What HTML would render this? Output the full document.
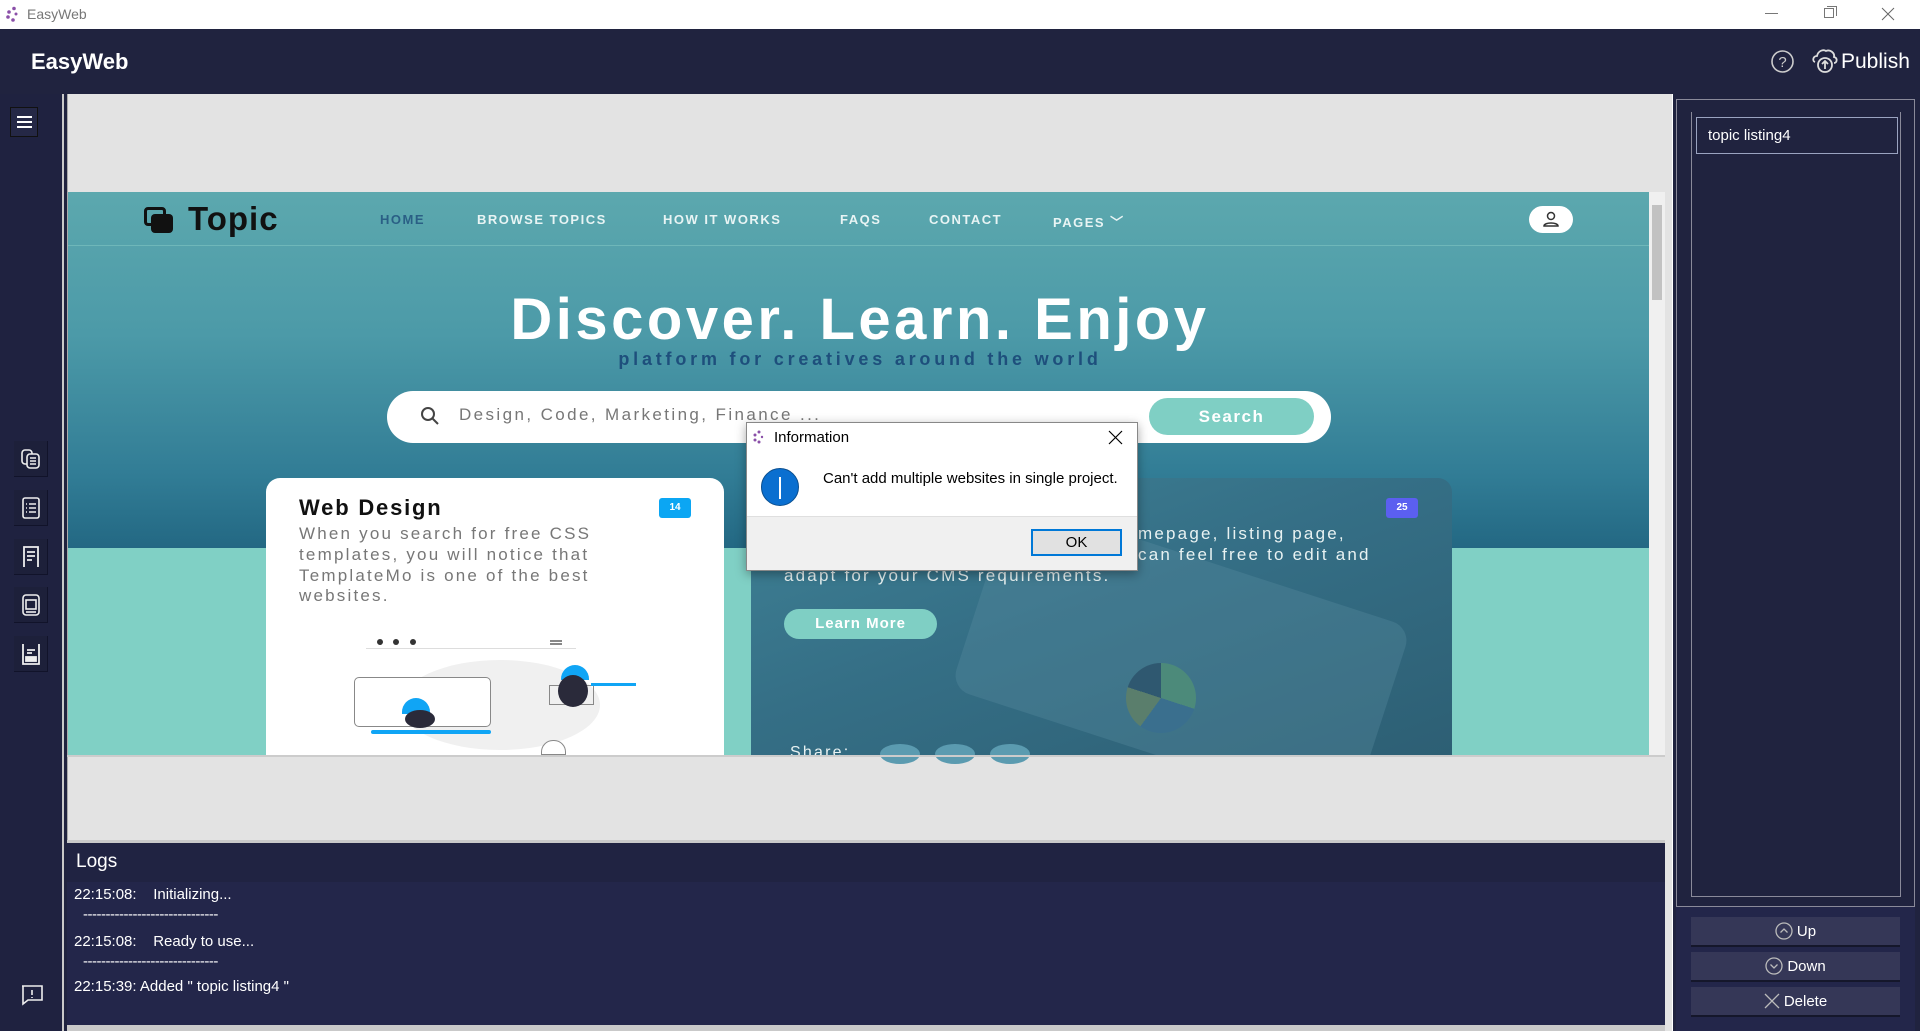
<!DOCTYPE html>
<html><head><meta charset="utf-8"><style>
*{box-sizing:border-box;margin:0;padding:0}
body{width:1920px;height:1031px;overflow:hidden;background:#20233f;font-family:"Liberation Sans",sans-serif;position:relative}
.a{position:absolute}
.nav{position:absolute;top:212px;font-size:13px;font-weight:bold;color:#e8f4f4;letter-spacing:1.5px}
.sb{position:absolute;left:14px;width:34px;height:36px;background:#1d203a;border-right:1px solid #11132a;border-bottom:1px solid #11132a}
.btn{position:absolute;left:1691px;width:209px;height:30px;background:#353757;border-bottom:2px solid #15172b;color:#fff;font-size:15px;display:flex;align-items:center;justify-content:center;gap:4px}
.log{position:absolute;left:74px;color:#fff;font-size:15px}
.ct{position:absolute;left:299px;font-size:17px;color:#777;letter-spacing:2.2px}
.wt{position:absolute;font-size:17px;color:#e8f2f2;letter-spacing:2.2px}
</style></head><body>
<div class="a" style="left:0;top:0;width:1920px;height:29px;background:#fff"></div>
<svg class="a" style="left:5px;top:6px" width="14" height="16"><circle cx="9" cy="2.5" r="1.8" fill="#8a4fa8"/><circle cx="4" cy="6" r="1.8" fill="#8a4fa8"/><circle cx="3" cy="11" r="1.8" fill="#8a4fa8"/><circle cx="8" cy="14" r="1.8" fill="#8a4fa8"/><circle cx="11" cy="8" r="1.5" fill="#8a4fa8"/></svg>
<div class="a" style="left:27px;top:6px;font-size:14px;color:#777">EasyWeb</div>
<div class="a" style="left:1765px;top:13px;width:13px;height:1px;background:#777"></div>
<div class="a" style="left:1824px;top:8px;width:10px;height:10px;border:1px solid #777"></div>
<div class="a" style="left:1827px;top:6px;width:10px;height:10px;border-top:1px solid #777;border-right:1px solid #777"></div>
<svg class="a" style="left:1881px;top:7px" width="14" height="14"><path d="M1 1L13 13M13 1L1 13" stroke="#666" stroke-width="1"/></svg>
<div class="a" style="left:31px;top:49px;font-size:22px;font-weight:bold;color:#fff">EasyWeb</div>
<svg class="a" style="left:1770px;top:49px" width="25" height="25"><circle cx="12.5" cy="12.5" r="10.5" fill="none" stroke="#ccc" stroke-width="1.6"/><text x="12.5" y="18" font-size="15" fill="#ccc" text-anchor="middle" font-family="Liberation Sans">?</text></svg>
<svg class="a" style="left:1811px;top:47px" width="28" height="28"><path d="M4 15C1 14 2 9 6 9C7 4 12 2 15 4C19 2 24 6 23 10C27 11 26 16 23 16" fill="none" stroke="#ddd" stroke-width="1.8"/><circle cx="14" cy="18" r="7" fill="none" stroke="#ddd" stroke-width="1.8"/><path d="M14 22V14M11 17L14 14L17 17" stroke="#ddd" stroke-width="1.8" fill="none"/></svg>
<div class="a" style="left:1841px;top:50px;font-size:21px;color:#fff">Publish</div>
<div class="a" style="left:0;top:94px;width:64px;height:937px;background:#1f2240;border-right:2px solid #c9c9c9"></div>
<div class="a" style="left:10px;top:107px;width:28px;height:30px;background:#252846;border:1px solid #111"></div>
<div class="a" style="left:17px;top:116px;width:15px;height:2px;background:#fff;box-shadow:0 5px 0 #fff,0 10px 0 #fff"></div>
<div class="sb" style="top:441px"></div>
<svg class="a" style="left:20px;top:448px" width="22" height="22" fill="none" stroke="#eee" stroke-width="1.6"><rect x="2" y="2" width="10" height="14" rx="3"/><rect x="7" y="6" width="12" height="14" rx="3" fill="#1d203a"/><path d="M10 10h6M10 13h6M10 16h6"/></svg>
<div class="sb" style="top:490px"></div>
<svg class="a" style="left:21px;top:496px" width="20" height="24" fill="none" stroke="#eee" stroke-width="1.6"><rect x="2" y="2" width="16" height="20" rx="2"/><path d="M5 8h1M8 8h7M5 12h1M8 12h7M5 16h1M8 16h7"/></svg>
<div class="sb" style="top:539px"></div>
<svg class="a" style="left:21px;top:545px" width="20" height="24" fill="none" stroke="#eee" stroke-width="1.8"><path d="M3 22V2h14v20"/><path d="M6 7h8M6 11h8M6 15h5"/></svg>
<div class="sb" style="top:587px"></div>
<svg class="a" style="left:21px;top:593px" width="20" height="24" fill="none" stroke="#eee" stroke-width="1.6"><rect x="2" y="2" width="16" height="20" rx="3"/><rect x="5" y="7" width="10" height="9"/><path d="M5 19h10"/></svg>
<div class="sb" style="top:636px"></div>
<svg class="a" style="left:21px;top:642px" width="20" height="24" fill="none" stroke="#eee" stroke-width="1.8"><path d="M2 2v20h16V2"/><path d="M6 8h8M6 11h5" /><rect x="5" y="15" width="10" height="4" fill="#eee"/></svg>
<svg class="a" style="left:20px;top:984px" width="24" height="22" fill="none" stroke="#eee" stroke-width="1.6"><path d="M2 2h20v14H8l-5 4V2z"/><path d="M12 6v5M12 13v1"/></svg>
<div class="a" style="left:67px;top:94px;width:1598px;height:746px;background:#e3e3e3;border-left:1px solid #aaa"></div>
<div class="a" style="left:68px;top:192px;width:1581px;height:563px;background:#80d0c5;overflow:hidden">
 <div class="a" style="left:0;top:0;width:1581px;height:356px;background:linear-gradient(180deg,#5ca8ae 0%,#4c9aa8 40%,#317c95 80%,#236883 100%)"></div>
 <div class="a" style="left:0;top:53px;width:1581px;height:1px;background:#6fb7b9"></div>
 <div class="a" style="left:76px;top:15px;width:22px;height:19px;border:3px solid #111;border-radius:4px"></div>
 <div class="a" style="left:83px;top:22px;width:22px;height:19px;background:#111;border-radius:4px"></div>
 <div class="a" style="left:120px;top:8px;font-size:33px;font-weight:bold;color:#111;letter-spacing:1px">Topic</div>
</div>
<div class="nav" style="left:380px;color:#2a5f85">HOME</div>
<div class="nav" style="left:477px">BROWSE TOPICS</div>
<div class="nav" style="left:663px">HOW IT WORKS</div>
<div class="nav" style="left:840px">FAQS</div>
<div class="nav" style="left:929px">CONTACT</div>
<div class="nav" style="left:1053px">PAGES ﹀</div>
<div class="a" style="left:1529px;top:206px;width:44px;height:27px;background:#fff;border-radius:14px"></div>
<svg class="a" style="left:1541px;top:210px" width="20" height="18" fill="none" stroke="#333" stroke-width="1.5"><circle cx="10" cy="6" r="3.5"/><path d="M3 16c0-4 14-4 14 0z"/></svg>
<div class="a" style="left:0;top:286px;width:1720px;text-align:center;font-size:58px;font-weight:bold;color:#fff;letter-spacing:3.5px">Discover. Learn. Enjoy</div>
<div class="a" style="left:0;top:349px;width:1720px;text-align:center;font-size:18px;font-weight:bold;color:#1e4f7c;letter-spacing:3.8px">platform for creatives around the world</div>
<div class="a" style="left:387px;top:391px;width:944px;height:52px;background:#fff;border-radius:26px"></div>
<svg class="a" style="left:420px;top:406px" width="20" height="20" fill="none" stroke="#444" stroke-width="2"><circle cx="8" cy="8" r="6"/><path d="M12.5 12.5L18 18"/></svg>
<div class="a" style="left:459px;top:405px;font-size:17px;color:#777;letter-spacing:2.4px">Design, Code, Marketing, Finance ...</div>
<div class="a" style="left:1149px;top:398px;width:165px;height:37px;background:#7fcfc4;border-radius:19px;color:#fff;font-weight:bold;font-size:17px;text-align:center;line-height:37px;letter-spacing:1.5px">Search</div>
<div class="a" style="left:266px;top:478px;width:458px;height:277px;background:#fff;border-radius:14px 14px 0 0"></div>
<div class="a" style="left:299px;top:495px;font-size:22px;font-weight:bold;color:#111;letter-spacing:1.8px">Web Design</div>
<div class="a" style="left:659px;top:498px;width:32px;height:20px;background:#0ba6f3;border-radius:3px;color:#fff;font-size:10px;font-weight:bold;text-align:center;line-height:20px">14</div>
<div class="ct" style="top:524px">When you search for free CSS</div>
<div class="ct" style="top:545px">templates, you will notice that</div>
<div class="ct" style="top:566px">TemplateMo is one of the best</div>
<div class="ct" style="top:586px">websites.</div>
<div class="a" style="left:366px;top:648px;width:210px;height:1px;background:#ddd"></div>
<div class="a" style="left:377px;top:639px;width:6px;height:6px;border-radius:50%;background:#333;box-shadow:16px 0 #333,33px 0 #333"></div>
<div class="a" style="left:550px;top:640px;width:12px;height:5px;border-top:2px solid #888;border-bottom:2px solid #888"></div>
<div class="a" style="left:400px;top:660px;width:200px;height:90px;background:#f0f0f0;border-radius:50%"></div>
<div class="a" style="left:354px;top:677px;width:137px;height:50px;border:1px solid #888;border-radius:5px;background:#fff"></div>
<div class="a" style="left:371px;top:730px;width:120px;height:4px;background:#10a5f5;border-radius:2px"></div>
<div class="a" style="left:402px;top:698px;width:28px;height:16px;background:#10a5f5;border-radius:14px 14px 0 0"></div>
<div class="a" style="left:405px;top:710px;width:30px;height:18px;background:#2a2a3a;border-radius:50%"></div>
<div class="a" style="left:561px;top:665px;width:28px;height:15px;background:#10a5f5;border-radius:14px 14px 0 0"></div>
<div class="a" style="left:549px;top:685px;width:45px;height:20px;border:1px solid #888"></div>
<div class="a" style="left:558px;top:675px;width:30px;height:32px;background:#2a2a3a;border-radius:50%"></div>
<div class="a" style="left:591px;top:683px;width:45px;height:3px;background:#10a5f5"></div>
<div class="a" style="left:541px;top:740px;width:25px;height:15px;border:1px solid #888;border-radius:12px 12px 0 0;background:#fff"></div>
<div class="a" style="left:751px;top:478px;width:701px;height:277px;background:linear-gradient(160deg,#3f8296 0%,#356f86 45%,#2d5f74 100%);border-radius:14px 14px 0 0;overflow:hidden">
 <div class="a" style="left:220px;top:80px;width:420px;height:200px;background:rgba(90,140,160,.35);transform:rotate(18deg);border-radius:20px"></div>
 <div class="a" style="left:375px;top:185px;width:70px;height:70px;border-radius:50%;background:conic-gradient(#4c8a7a 0 30%,#3a6f8e 30% 60%,#5a7e6c 60% 80%,#2f5870 80%)"></div>
</div>
<div class="a" style="left:1386px;top:498px;width:32px;height:20px;background:#5b5ff0;border-radius:3px;color:#fff;font-size:10px;font-weight:bold;text-align:center;line-height:20px">25</div>
<div class="wt" style="left:1138px;top:524px">mepage, listing page,</div>
<div class="wt" style="left:1138px;top:545px">can feel free to edit and</div>
<div class="wt" style="left:784px;top:566px">adapt for your CMS requirements.</div>
<div class="a" style="left:784px;top:609px;width:153px;height:30px;background:#7fcfc4;border-radius:15px;color:#fff;font-weight:bold;font-size:15px;text-align:center;line-height:30px;letter-spacing:1px">Learn More</div>
<div class="wt" style="left:790px;top:744px;font-size:16px">Share:</div>
<div class="a" style="left:880px;top:744px;width:40px;height:20px;border-radius:50%;background:#5b9bb0;box-shadow:55px 0 #5b9bb0,110px 0 #5b9bb0"></div>
<div class="a" style="left:1649px;top:192px;width:16px;height:563px;background:#f0f0f0"></div>
<div class="a" style="left:1652px;top:205px;width:10px;height:95px;background:#c2c2c2"></div>
<div class="a" style="left:67px;top:755px;width:1598px;height:2px;background:#ccc"></div>
<div class="a" style="left:746px;top:422px;width:392px;height:149px;background:#fff;border:1px solid #888;box-shadow:0 3px 10px rgba(0,0,0,.35)"></div>
<div class="a" style="left:747px;top:516px;width:390px;height:54px;background:#f0f0f0;border-top:1px solid #dfdfdf"></div>
<svg class="a" style="left:752px;top:430px" width="12" height="14"><circle cx="7" cy="2" r="1.5" fill="#8a4fa8"/><circle cx="3" cy="5" r="1.5" fill="#8a4fa8"/><circle cx="3" cy="10" r="1.5" fill="#8a4fa8"/><circle cx="7" cy="12" r="1.5" fill="#8a4fa8"/><circle cx="10" cy="7" r="1.2" fill="#8a4fa8"/></svg>
<div class="a" style="left:774px;top:429px;font-size:15px;color:#000">Information</div>
<svg class="a" style="left:1108px;top:430px" width="15" height="15"><path d="M1 1L14 14M14 1L1 14" stroke="#000" stroke-width="1.2"/></svg>
<div class="a" style="left:761px;top:468px;width:38px;height:38px;border-radius:50%;background:#0a6fd0;border:1px solid #0a4f90"></div>
<div class="a" style="left:779px;top:477px;width:2px;height:22px;background:#fff"></div>
<div class="a" style="left:823px;top:470px;font-size:15px;color:#000">Can't add multiple websites in single project.</div>
<div class="a" style="left:1031px;top:529px;width:91px;height:27px;background:#e1e1e1;border:2px solid #0078d7;font-size:15px;text-align:center;line-height:23px;color:#000">OK</div>
<div class="a" style="left:67px;top:840px;width:1598px;height:191px;background:#c9c9c9"></div>
<div class="a" style="left:67px;top:843px;width:1598px;height:40px;background:#202342"></div>
<div class="a" style="left:67px;top:882px;width:1598px;height:143px;background:#23264a"></div>
<div class="a" style="left:76px;top:851px;font-size:19px;color:#fff">Logs</div>
<div class="log" style="top:886px">22:15:08:&nbsp;&nbsp;&nbsp;&nbsp;Initializing...</div>
<div class="log" style="top:906px;left:83px;letter-spacing:-.5px">------------------------------</div>
<div class="log" style="top:933px">22:15:08:&nbsp;&nbsp;&nbsp;&nbsp;Ready to use...</div>
<div class="log" style="top:953px;left:83px;letter-spacing:-.5px">------------------------------</div>
<div class="log" style="top:978px">22:15:39: Added " topic listing4 "</div>
<div class="a" style="left:1665px;top:94px;width:7px;height:937px;background:#e3e3e3"></div>
<div class="a" style="left:1672px;top:94px;width:248px;height:937px;background:#20233f;border-left:1px solid #fff"></div>
<div class="a" style="left:1676px;top:99px;width:239px;height:808px;border:1px solid #8a8a9a"></div>
<div class="a" style="left:1691px;top:112px;width:210px;height:785px;border-left:1px solid #8a8a9a;border-right:1px solid #8a8a9a;border-bottom:1px solid #8a8a9a"></div>
<div class="a" style="left:1696px;top:117px;width:202px;height:37px;border:1px solid #9aa3c0;background:#20233f;color:#fff;font-size:15px;padding:9px 11px">topic listing4</div>
<div class="a" style="left:1676px;top:907px;width:239px;height:124px;background:#23264a"></div>
<div class="btn" style="top:917px"><svg width="18" height="18" fill="none" stroke="#bbb" stroke-width="1.3"><circle cx="9" cy="9" r="8"/><path d="M5.5 10.5L9 7l3.5 3.5"/></svg>Up</div>
<div class="btn" style="top:952px"><svg width="18" height="18" fill="none" stroke="#bbb" stroke-width="1.3"><circle cx="9" cy="9" r="8"/><path d="M5.5 7.5L9 11l3.5-3.5"/></svg>Down</div>
<div class="btn" style="top:987px"><svg width="16" height="16" fill="none" stroke="#bbb" stroke-width="1.3"><path d="M1 1L15 15M15 1L1 15"/></svg>Delete</div>
</body></html>
